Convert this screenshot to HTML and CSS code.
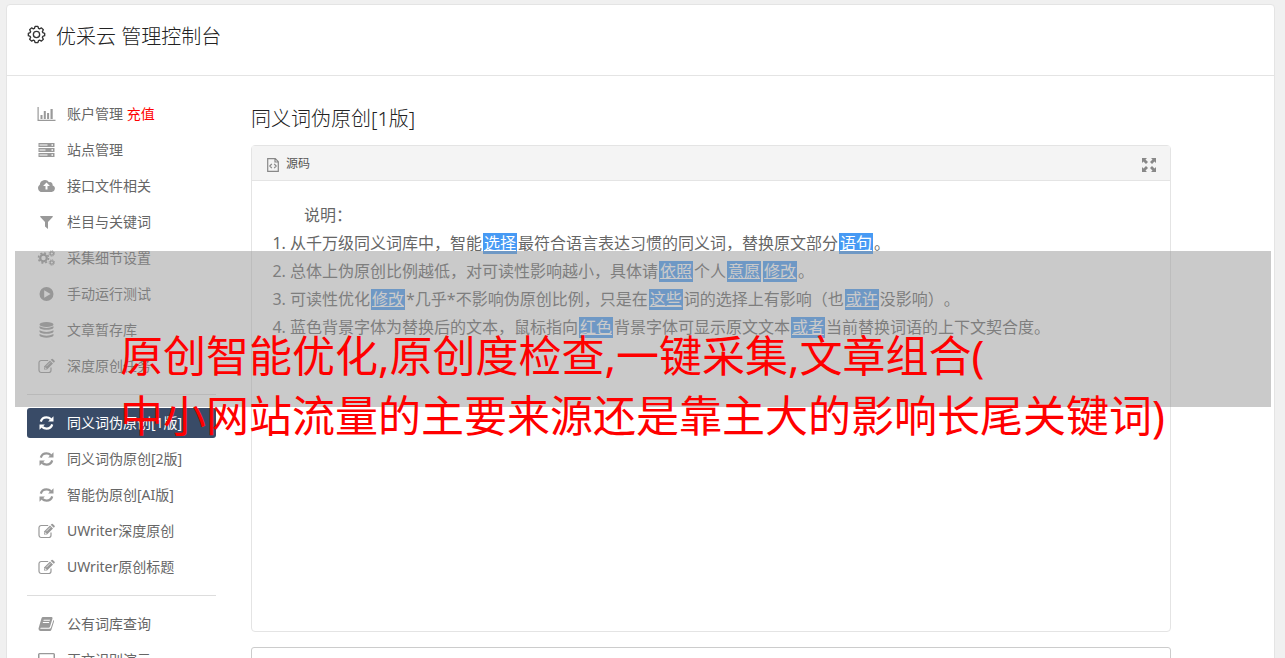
FILE: index.html
```
<!doctype html>
<html lang="zh-CN">
  <head>
    <meta charset="utf-8">
    <meta name="viewport" content="width=device-width, initial-scale=1">
    <title>优采云 管理控制台</title>
    <link rel="stylesheet" href="styles.css">
  </head>
  <body>
    <!-- shared icons -->
    <svg class="sprite" aria-hidden="true">
      <symbol id="i-refresh" viewBox="0 0 16 16">
        <path d="M2.3 6.6C3 3.9 5.2 2.3 8 2.3c1.700 0 3.200.7 4.300 1.800" fill="none" stroke="currentColor" stroke-width="2.200"/>
        <path d="M15 1.200v5.400H9.600z"/>
        <path d="M13.700 9.400C13 12.100 10.800 13.700 8 13.700c-1.700 0-3.200-.7-4.300-1.800" fill="none" stroke="currentColor" stroke-width="2.200"/>
        <path d="M1 14.800V9.400h5.400z"/>
      </symbol>
      <symbol id="i-edit" viewBox="0 0 18 16">
        <path d="M13.500 9.500v2.800a2.200 2.200 0 0 1-2.200 2.200H3.700a2.200 2.200 0 0 1-2.200-2.200V4.700a2.200 2.200 0 0 1 2.200-2.200h7" fill="none" stroke="currentColor" stroke-width="1.200"/>
        <path d="M6.500 8.500l6-6 3 3-6 6h-3zM13.200 1.800l.9-.9q.6-.5 1.200 0l1.800 1.800q.5.600 0 1.200l-.9.900z"/>
        <path d="M7.500 9v1.500H9M8.800 8.300l4-4" fill="none" stroke="#fff" stroke-width=".7"/>
      </symbol>
    </svg>

    <div class="page">
      <header class="header">
        <svg class="gear" viewBox="0 0 20 20" fill="none" stroke="currentColor" stroke-width="1.400">
          <path d="M8.500 1.500h3l.7 2.100 1 .4 2-1 2 2-1 2 .4 1 2 .7v2.600l-2 .7-.4 1 1 2-2 2-2-1-1 .4-.7 2.100h-3l-.7-2.100-1-.4-2 1-2-2 1-2-.4-1-2-.7V8.700l2-.7.400-1-1-2 2-2 2 1 1-.4z" stroke-linejoin="round"/>
          <circle cx="10" cy="10" r="3.300"/>
        </svg>
        <h1>优采云 管理控制台</h1>
      </header>

      <div class="content">
        <nav class="sidebar">
          <ul>
            <li><a href="#">
              <svg class="icon" viewBox="0 0 18 16"><path d="M0 1h1.200v12.800H18V15H0zM3 9h2v4H3zM6.300 5h2v8h-2zM9.600 7h2v6h-2zM13 3h2.200v10H13z"/></svg>
              <span>账户管理 <em>充值</em></span></a></li>
            <li><a href="#">
              <svg class="icon" viewBox="0 0 18 16"><path fill-rule="evenodd" d="M1 1h16v4H1zM1 6h16v4H1zM1 11h16v4H1zM2 2.500v1h8v-1zM2 7.500v1h6v-1zM2 12.500v1h8v-1zM14 2.300v1.400h1.500V2.300zM14 7.300v1.400h1.500V7.300zM14 12.300v1.400h1.500v-1.400z"/></svg>
              <span>站点管理</span></a></li>
            <li><a href="#">
              <svg class="icon" viewBox="0 0 18 16"><path fill-rule="evenodd" d="M4.500 14A4 4 0 0 1 2.300 6.700a5 5 0 0 1 9.200-2.400 2.700 2.700 0 0 1 3.600 3.100A3.400 3.400 0 0 1 14.300 14zM9 4.500L5.600 8H8v3.500h2V8h2.400z"/></svg>
              <span>接口文件相关</span></a></li>
            <li><a href="#">
              <svg class="icon" viewBox="0 0 18 16"><path d="M3 2h12q.6.500.2 1l-4.700 4.900V15L7.500 12.600V7.900L2.800 3q-.3-.6.200-1z"/></svg>
              <span>栏目与关键词</span></a></li>
            <li><a href="#">
              <svg class="icon" viewBox="0 0 18 16" fill="none" stroke="currentColor">
                <circle cx="6" cy="8" r="3.300" stroke-width="2.200"/><circle cx="6" cy="8" r="5" stroke-width="1.600" stroke-dasharray="2 1.930"/>
                <circle cx="14.300" cy="3.500" r="1.700" stroke-width="1.200"/><circle cx="14.300" cy="3.500" r="2.700" stroke-dasharray="1.200 .920"/>
                <circle cx="14.300" cy="12.500" r="1.700" stroke-width="1.200"/><circle cx="14.300" cy="12.500" r="2.700" stroke-dasharray="1.200 .920"/>
              </svg>
              <span>采集细节设置</span></a></li>
            <li><a href="#">
              <svg class="icon" viewBox="0 0 18 16"><path fill-rule="evenodd" d="M9 1a7 7 0 1 1 0 14A7 7 0 0 1 9 1zM6.700 4.200v7.600L13 8z"/></svg>
              <span>手动运行测试</span></a></li>
            <li><a href="#">
              <svg class="icon" viewBox="0 0 18 16"><ellipse cx="9" cy="2.500" rx="7" ry="2.500"/><path d="M2 4.300q7 3.400 14 0v1.500C15 8.500 3 8.500 2 5.800zM2 8.200q7 3.400 14 0v1.500c-1 2.700-13 2.700-14 0zM2 12.100q7 3.400 14 0v1.500c-1 2.700-13 2.700-14 0z"/></svg>
              <span>文章暂存库</span></a></li>
            <li><a href="#"><svg class="icon"><use href="#i-edit"/></svg><span>深度原创任务</span></a></li>
          </ul>
          <hr>
          <ul>
            <li><a class="active" href="#"><svg class="icon"><use href="#i-refresh"/></svg><span>同义词伪原创[1版]</span></a></li>
            <li><a href="#"><svg class="icon"><use href="#i-refresh"/></svg><span>同义词伪原创[2版]</span></a></li>
            <li><a href="#"><svg class="icon"><use href="#i-refresh"/></svg><span>智能伪原创[AI版]</span></a></li>
            <li><a href="#"><svg class="icon"><use href="#i-edit"/></svg><span>UWriter深度原创</span></a></li>
            <li><a href="#"><svg class="icon"><use href="#i-edit"/></svg><span>UWriter原创标题</span></a></li>
          </ul>
          <hr>
          <ul>
            <li><a href="#">
              <svg class="icon" viewBox="0 0 18 16"><path fill-rule="evenodd" d="M5.500 1h8.700q1.100.2.800 1.400l-2.500 8.400q-.3 1-1.300 1H3.500q-1 .2-.6 1h9q1.200 0 1.600-1.200L16 4q.8.500.5 1.400l-2.600 8.400q-.4 1.200-1.500 1.200H3q-2.200-.5-2-2.500L4 2.200Q4.400 1 5.500 1zM6.200 3.700l-.3 1h6.300l.3-1zM5.500 6l-.3 1h6.300l.3-1z"/></svg>
              <span>公有词库查询</span></a></li>
            <li><a href="#">
              <svg class="icon" viewBox="0 0 18 16"><path fill-rule="evenodd" d="M2 1h14q1.500 0 1.500 1.500v8Q17.500 12 16 12h-5v2h2v1H5v-1h2v-2H2Q.5 12 .5 10.500v-8Q.5 1 2 1zm0 1.200v7.500h14V2.200z"/></svg>
              <span>正文识别演示</span></a></li>
          </ul>
        </nav>

        <main class="main">
          <h2>同义词伪原创[1版]</h2>
          <section class="editor">
            <div class="toolbar">
              <button type="button">
                <svg class="source" viewBox="0 0 12 14" fill="none" stroke="currentColor"><path d="M.7.700h7.600l3 3v9.600H.7zM8 1v3h3M4.800 5.800L2.800 8l2 2.200M7.200 5.800l2 2.200-2 2.200" stroke-width="1.200"/></svg>
                源码
              </button>
              <button type="button" aria-label="全屏">
                <svg class="expand" viewBox="0 0 14 14"><path d="M0 0h5L3.500 1.500 6 4 4 6 1.500 3.500 0 5zM14 0v5l-1.500-1.500L10 6 8 4l2.500-2.500L9 0zM0 14V9l1.500 1.500L4 8l2 2-2.500 2.500L5 14zM14 14H9l1.500-1.500L8 10l2-2 2.500 2.500L14 9z"/></svg>
              </button>
            </div>
            <div class="article">
              <p>说明：</p>
              <ol>
                <li>从千万级同义词库中，智能<mark>选择</mark>最符合语言表达习惯的同义词，替换原文部分<mark>语句</mark>。</li>
                <li>总体上伪原创比例越低，对可读性影响越小，具体请<mark>依照</mark>个人<mark>意愿</mark><mark>修改</mark>。</li>
                <li>可读性优化<mark>修改</mark>*几乎*不影响伪原创比例，只是在<mark>这些</mark>词的选择上有影响（也<mark>或许</mark>没影响）。</li>
                <li>蓝色背景字体为替换后的文本，鼠标指向<mark>红色</mark>背景字体可显示原文文本<mark>或者</mark>当前替换词语的上下文契合度。</li>
              </ol>
            </div>
          </section>
          <textarea class="result" aria-label="结果"></textarea>
        </main>
      </div>
    </div>

    <div class="banner">原创智能优化,原创度检查,一键采集,文章组合(<br>中小网站流量的主要来源还是靠主大的影响长尾关键词)</div>
  </body>
</html>
```
FILE: styles.css
```
* {
  box-sizing: border-box;
}

body {
  position: relative;
  height: 100vh;
  margin: 0;
  padding: 4px 10px 0 6px;
  overflow: hidden;
  background: #f0f0f0;
  color: #666;
  font-family: "Noto Sans", "Noto Sans CJK SC", sans-serif;
  font-size: 14px;
  text-spacing-trim: space-all;
}

ul, ol, p, h1, h2 {
  margin: 0;
  padding: 0;
}

h1, h2 {
  color: #222;
  font-size: 20px;
  font-weight: 300;
  line-height: 32px;
}

svg {
  fill: currentColor;
}

svg[fill="none"] {
  fill: none;
}

.sprite {
  position: absolute;
  width: 0;
  height: 0;
}

.page {
  background: #fff;
  border: 1px solid #e4e4e4;
  border-radius: 4px;
}

.header {
  display: flex;
  gap: 10px;
  height: 71px;
  padding: 16px 20px;
  border-bottom: 1px solid #e4e4e4;
}

.gear {
  width: 19px;
  height: 19px;
  margin-top: 4px;
  color: #333;
}

.content {
  display: flex;
  gap: 35px;
  padding: 23px 103px 20px 20px;
}

.sidebar {
  flex: 0 0 189px;
}

.sidebar ul {
  display: grid;
  gap: 6px;
  list-style: none;
}

.sidebar a {
  display: flex;
  align-items: center;
  gap: 11px;
  height: 30px;
  padding: 0 10px;
  border-radius: 3px;
  color: #666;
  line-height: 30px;
  text-decoration: none;
  white-space: nowrap;
}

.sidebar a.active {
  background: #394b67;
  color: #fff;
}

.sidebar em {
  color: #f00;
  font-style: normal;
}

.sidebar hr {
  height: 1px;
  margin: 13px 0;
  border: 0;
  background: #ddd;
}

.icon {
  flex: none;
  width: 19px;
  height: 16px;
  color: #999;
}

.active .icon {
  color: #fff;
}

.main {
  flex: 1;
  min-width: 0;
}

.main h2 {
  margin: 4px 0 10px;
}

.editor {
  border: 1px solid #e4e4e4;
  border-radius: 4px;
}

.toolbar {
  display: flex;
  justify-content: space-between;
  height: 35px;
  padding: 0 13px 0 15px;
  background: #f4f4f4;
  border-bottom: 1px solid #e4e4e4;
}

.toolbar button {
  display: flex;
  align-items: center;
  gap: 7px;
  padding: 0;
  border: 0;
  background: none;
  color: #555;
  font: inherit;
  font-size: 12px;
}

.toolbar svg {
  height: 14px;
  margin-top: 3px;
  color: #888;
}

.source {
  width: 12px;
}

.expand {
  width: 16px;
}

.article {
  min-height: 450px;
  padding: 20px;
  font-size: 16px;
  line-height: 28px;
}

.article p {
  text-indent: 2em;
}

.article ol {
  padding-left: 18px;
}

.article mark {
  display: inline-block;
  margin: 0 1px;
  padding: 0 1px;
  background: #479af4;
  color: #fff;
  line-height: 21px;
  text-decoration: underline;
}

.result {
  display: block;
  width: 100%;
  height: 120px;
  margin-top: 15px;
  border: 1px solid #ccc;
  border-radius: 3px;
  resize: none;
}

/* translucent strip with the headline running past its lower edge */
.banner {
  position: absolute;
  top: 251px;
  right: 14px;
  left: 15px;
  height: 156px;
  padding: 75px 0 0 105px;
  background: rgba(150, 150, 150, 0.5);
  color: #f00;
  font-size: 43px;
  line-height: 60px;
  white-space: nowrap;
}
```
